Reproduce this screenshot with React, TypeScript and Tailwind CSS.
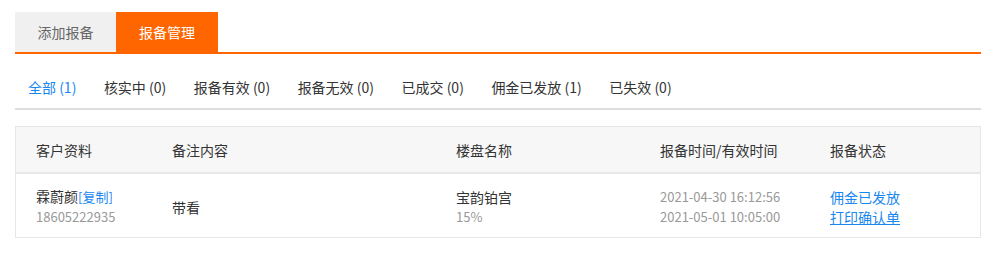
import React from "react";

const filters = [
  { label: "全部 (1)", active: true },
  { label: "核实中 (0)" },
  { label: "报备有效 (0)" },
  { label: "报备无效 (0)" },
  { label: "已成交 (0)" },
  { label: "佣金已发放 (1)" },
  { label: "已失效 (0)" },
];

const cols = "grid grid-cols-[136px_284px_204px_170px_1fr]";

export default function App() {
  return (
    <div
      className="min-h-[257px] bg-white px-[15px] pt-3 text-[14px] text-[#333]"
      style={{ fontFamily: '"Noto Sans CJK SC", "Noto Sans", sans-serif' }}
    >
      {/* Tabs */}
      <div className="flex h-[42px] border-b-2 border-[#ff6600]">
        <div className="flex h-10 w-[101px] items-center justify-center bg-[#f0f0f0] text-[#666]">
          添加报备
        </div>
        <div className="flex h-10 w-[102px] items-center justify-center bg-[#ff6600] text-white">
          报备管理
        </div>
      </div>

      {/* Filters */}
      <div className="flex gap-[1.5px] border-b-2 border-[#dddddd] pt-[23px] pb-[11px] leading-5">
        {filters.map((f) => (
          <span
            key={f.label}
            className={`px-[13px] ${f.active ? "text-[#1a87f0]" : "text-[#333]"}`}
          >
            {f.label}
          </span>
        ))}
      </div>

      {/* Table */}
      <div className="mt-4 border border-[#e6e6e6]">
        <div className={`${cols} h-[47px] items-center border-b-2 border-[#e8e8e8] bg-[#f7f7f7] leading-5`}>
          <div className="pl-5">客户资料</div>
          <div className="pl-5">备注内容</div>
          <div className="pl-5">楼盘名称</div>
          <div className="pl-5">报备时间/有效时间</div>
          <div className="pl-5">报备状态</div>
        </div>
        <div className={`${cols} h-[63px] items-center pt-[2px] leading-5`}>
          <div className="pl-5">
            <div>
              霖蔚颜<span className="text-[13px] text-[#1a87f0]">[复制]</span>
            </div>
            <div className="text-[13px] text-[#999]">18605222935</div>
          </div>
          <div className="pl-5">带看</div>
          <div className="pl-5">
            <div>宝韵铂宫</div>
            <div className="text-[13px] text-[#999]">15%</div>
          </div>
          <div className="pl-5 text-[13px] text-[#999]">
            <div>2021-04-30 16:12:56</div>
            <div>2021-05-01 10:05:00</div>
          </div>
          <div className="pl-5 text-[#1a87f0]">
            <div>佣金已发放</div>
            <div className="underline">打印确认单</div>
          </div>
        </div>
      </div>
    </div>
  );
}
